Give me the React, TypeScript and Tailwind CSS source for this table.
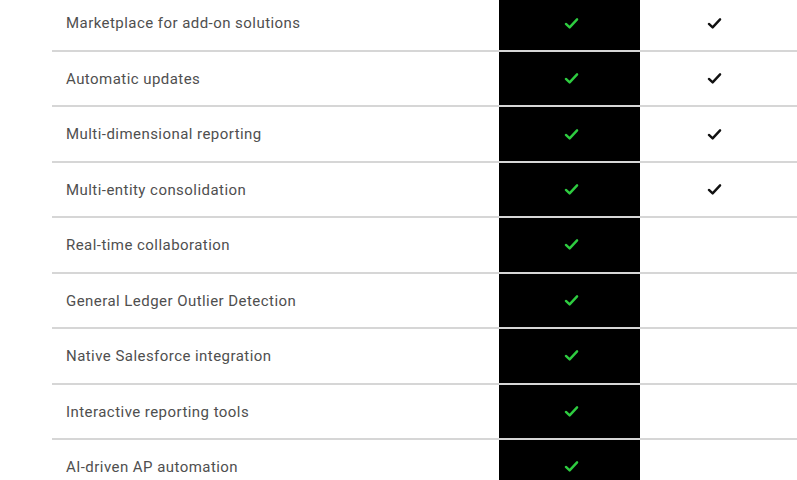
const rows: { label: string; pro: boolean }[] = [
  { label: "Marketplace for add-on solutions", pro: true },
  { label: "Automatic updates", pro: true },
  { label: "Multi-dimensional reporting", pro: true },
  { label: "Multi-entity consolidation", pro: true },
  { label: "Real-time collaboration", pro: false },
  { label: "General Ledger Outlier Detection", pro: false },
  { label: "Native Salesforce integration", pro: false },
  { label: "Interactive reporting tools", pro: false },
  { label: "AI-driven AP automation", pro: false },
];

function Check({ className }: { className: string }) {
  return (
    <svg viewBox="0 0 16 14" className={className} fill="none">
      <path
        d="M2 7.5 L6 11.2 L14 2.5"
        stroke="currentColor"
        strokeWidth="2.6"
        strokeLinecap="round"
        strokeLinejoin="round"
      />
    </svg>
  );
}

export default function App() {
  return (
    <div className="h-[480px] w-[797px] overflow-hidden bg-white">
      <div className="-mt-[3.5px] ml-[52px]" style={{ fontFamily: "Roboto, 'Noto Sans', sans-serif" }}>
        {rows.map((r) => (
          <div
            key={r.label}
            className="grid h-[55.45px] grid-cols-[447px_141px_148px_1fr] border-b-2 border-[#d6d6d6]"
          >
            <div className="flex items-center pl-[14px] pt-[1px] text-[15px] tracking-[0.45px] text-[#4f4f4f]">
              {r.label}
            </div>
            <div className="flex items-center justify-center bg-black pl-[3px]">
              <Check className="h-[13px] w-[15px] text-[#2ecc40]" />
            </div>
            <div className="flex items-center justify-center">
              {r.pro && <Check className="h-[13px] w-[15px] text-[#111]" />}
            </div>
            <div />
          </div>
        ))}
      </div>
    </div>
  );
}
